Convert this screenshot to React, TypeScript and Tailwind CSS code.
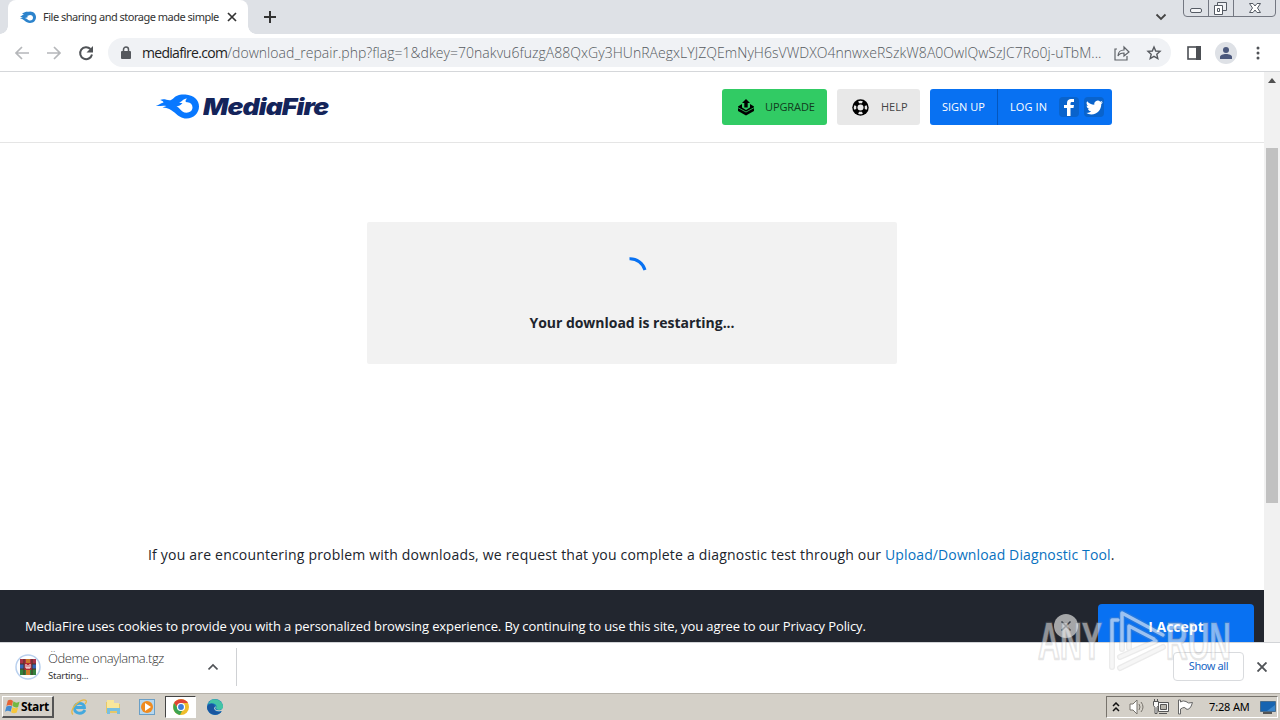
import React from "react";

const url = "/download_repair.php?flag=1&dkey=70nakvu6fuzgA88QxGy3HUnRAegxLYJZQEmNyH6sVWDXO4nnwxeRSzkW8A0OwlQwSzJC7Ro0j-uTbM...";

function Flame({ className, color }: { className: string; color: string }) {
  return (
    <svg className={className} viewBox="0 0 44 25" fill={color} fillRule="evenodd">
      <path d="M.3 12C3 11.500 5 9 8 8.500C7.500 7 6.500 6.500 4.700 6C8 4.500 11 6 14 6.300C17 6.300 18 3.500 21 2C24 .5 27 .2 30 .5C38 1 43.700 6 43.500 12.500C43.500 19 38 24.500 31 24.500C26 24.500 23 22 19 18.500C15 15.500 13 13.700 7 13.500L11 12C7 11 4 12.500 .3 12ZM21 12.500C24.500 13 25 18.500 31 18.700C34.500 18.700 37 16.500 37 13.500C37 10.500 35 8.500 32 8.300C30 8.300 29 7 31.500 4.500C27 5 26.500 8 23.500 8.500C25 9 26 9 27 9C25 11.500 23.500 12 21 12.500Z" />
    </svg>
  );
}

function TabStrip() {
  return (
    <div className="flex h-[34px] shrink-0 bg-[#dee1e6]">
      <div className="relative ml-2 flex h-full w-[240px] items-center rounded-t-lg bg-white pl-3">
        <i className="absolute -left-2 bottom-0 size-2 bg-[radial-gradient(circle_at_0_0,#dee1e6_7.5px,#fff_8px)]" />
        <i className="absolute -right-2 bottom-0 size-2 bg-[radial-gradient(circle_at_100%_0,#dee1e6_7.5px,#fff_8px)]" />
        <svg className="h-4 w-4 shrink-0" viewBox="0 0 16 16">
          <path fill="#2c83cc" fillRule="evenodd" d="M0 8L4 5L2 5C5 2 8 3 10 2.500C18 2.500 18 14 10 14C5 14 5 10 0 9.500L3 8ZM7 7C9 8 7 9 5 9C8 10 8 11.500 10 11.500C14 11.500 14 6 10 6Z" />
        </svg>
        <span className="ml-[7px] w-[178px] whitespace-nowrap font-['Noto_Sans'] text-[11px] tracking-[-0.5px] text-[#333]">File sharing and storage made simple</span>
        <svg className="ml-[6px] size-[10px]" viewBox="0 0 10 10" stroke="#333" strokeWidth="1.700"><path d="M1 1L9 9M9 1L1 9" /></svg>
      </div>
      <svg className="ml-[15px] mt-[10px] size-[14px]" viewBox="0 0 14 14" stroke="#333" strokeWidth="2"><path d="M7 1V13M1 7H13" /></svg>
      <svg className="ml-auto mr-[16px] mt-[13px] h-[8px] w-[12px]" viewBox="0 0 12 8" fill="none" stroke="#444" strokeWidth="1.800"><path d="M1.500 1.500L6 6L10.500 1.500" /></svg>
      <svg className="mr-[4px] h-[18px] w-[93px]" viewBox="0 0 93 18" fill="none" stroke="#737781">
        <path d="M.5 0V13Q.5 16.500 4 16.500H89Q92.500 16.500 92.500 13V0M25.500 0V16M50.500 0V16" />
        <g stroke="#555b64"><rect x="7.500" y="8.500" width="11" height="4" rx="1.500" fill="#f3f4f6" /><path fill="#eef0f3" d="M34.500 2.500H43.500V10.500H34.500Z" /><path fill="#fff" d="M31.500 5.500H39.500V14.500H31.500Z" /><path d="M34.500 8.500H36.500V11.500H34.500Z" /><path fill="#fff" d="M66.500 3.500H70L72 6L74 3.500H77.500L74.500 8L77.500 12.500H74L72 10L70 12.500H66.500L69.500 8Z" /></g>
      </svg>
    </div>
  );
}

function Toolbar() {
  return (
    <div className="flex h-[38px] shrink-0 items-center border-b border-[#d5d7da] bg-white">
      <svg className="ml-[14px] h-[16px] w-[82px]" viewBox="0 0 82 16" fill="none" strokeWidth="1.700">
        <g stroke="#b5b7ba"><path d="M15 8H2M8 2L2 8L8 14M33 8H46M40 2L46 8L40 14" /></g>
        <path stroke="#505357" strokeWidth="2" d="M76.500 4A6 6 0 1 0 78 9.500" /><path fill="#505357" d="M79 1V7.500H72.500Z" />
      </svg>
      <div className="ml-[12px] flex h-[29px] w-[1063px] items-center rounded-full bg-[#f0f2f5] pl-[13px]">
        <svg className="h-[13px] w-[10px] shrink-0" viewBox="0 0 10 13"><rect y="5" width="10" height="8" rx="1" fill="#55585d" /><path d="M2.500 6V3.500A2.500 2.500 0 0 1 7.500 3.500V6" fill="none" stroke="#55585d" strokeWidth="1.500" /></svg>
        <div className="ml-[11px] w-[962px] whitespace-nowrap font-['Open_Sans'] text-[14px] font-light tracking-[0.04px] text-[#555a60]">
          <span className="font-normal tracking-[-0.7px] text-[#222]">mediafire.com</span>{url}
        </div>
        <svg className="ml-[10px] h-[16px] w-[16px] shrink-0" viewBox="0 0 16 16" fill="none" stroke="#5f6368" strokeWidth="1.200"><path d="M3 4H1V15H13V11M4 11C4 7 7 5 10 5V2L15 7L10 11V8C7 8 5 9 4 11Z" /></svg>
        <svg className="ml-[16px] h-[16px] w-[16px] shrink-0" viewBox="0 0 16 16" fill="none" stroke="#55595e" strokeWidth="1.400"><path d="M8 2L9.700 6L14 6.400L10.800 9.300L11.800 13.500L8 11.300L4.200 13.500L5.200 9.300L2 6.400L6.300 6Z" /></svg>
      </div>
      <svg className="ml-[16px] h-[14px] w-[14px]" viewBox="0 0 14 14"><rect x="1" y="1" width="12" height="12" fill="#fff" stroke="#4c4f54" strokeWidth="1.600" /><path fill="#4c4f54" d="M9 0H14V14H9Z" /></svg>
      <svg className="ml-[14px] size-[22px]" viewBox="0 0 22 22"><circle cx="11" cy="11" r="11" fill="#dee1e6" /><g fill="#4b587c"><circle cx="11" cy="8" r="3" /><path d="M5 17V15C5 11 17 11 17 15V17Z" /></g></svg>
      <svg className="ml-[19px] h-[14px] w-[4px]" viewBox="0 0 4 14" fill="#505357"><circle cx="2" cy="2" r="1.500" /><circle cx="2" cy="7" r="1.500" /><circle cx="2" cy="12" r="1.500" /></svg>
    </div>
  );
}

function SiteHeader() {
  return (
    <header className="flex h-[71px] shrink-0 items-start border-b border-[#e5e5e5] pl-[155px] pt-[17px] font-['Open_Sans'] text-[11px]">
      <Flame className="mt-[5px] h-[25px] w-[45px]" color="#0878ff" />
      <span className="ml-[3px] mt-[3px] w-[129px] origin-left scale-x-[1.15] whitespace-nowrap font-['Inter'] text-[23px] font-black italic leading-[30px] tracking-[-0.75px] text-[#14245a]">MediaFire</span>
      <button className="ml-[390px] flex h-[36px] w-[105px] items-center rounded-[3px] bg-[#31cb64] pl-[15px] tracking-[-0.1px] text-[#123b20]">
        <svg className="mr-[10px] size-[18px]" viewBox="0 0 18 18"><path d="M1 8.500L5 6V9.500L9 12L13 9.500V6L17 8.500V13L9 17.500L1 13Z" /><path d="M9 1L13 5H10.700V9.500H7.300V5H5Z" /><path d="M1 9.700L9 14L17 9.700" stroke="#31cb64" strokeWidth=".8" fill="none" /></svg>
        UPGRADE
      </button>
      <button className="ml-[10px] flex h-[36px] w-[83px] items-center rounded-[3px] bg-[#e8e8e8] pl-[15px] text-[#444]">
        <svg className="mr-[12px] size-[17px]" viewBox="0 0 18 18"><circle cx="9" cy="9" r="8.700" /><g fill="#e8e8e8"><circle cx="9" cy="9" r="3.200" /><path d="M6.500 2.500Q9 1.200 11.500 2.500L10.500 4.500H7.500ZM6.500 15.500Q9 16.800 11.500 15.500L10.500 13.500H7.500ZM2.500 6.500Q1.200 9 2.500 11.500L4.500 10.500V7.500ZM15.500 6.500Q16.800 9 15.500 11.500L13.500 10.500V7.500Z" /></g></svg>
        HELP
      </button>
      <div className="ml-[10px] flex h-[36px] w-[182px] rounded-[3px] bg-[#0871f2] text-white">
        <span className="flex w-[68px] items-center whitespace-nowrap border-r border-[#0557be] pl-3">SIGN UP</span>
        <span className="flex w-[61px] items-center whitespace-nowrap pl-3 tracking-[0.1px]">LOG IN</span>
        <span className="mt-2 flex size-5 items-center justify-center rounded-sm bg-[#0963cc]"><svg className="h-[17px] w-[11px]" viewBox="0 0 11 17" fill="#fff"><path d="M3 17V9H0V6H3V4C3 1 5 0 7 0H10V3H8C7 3 6.500 3.500 6.500 4.500V6H10L9.500 9H6.500V17Z" /></svg></span>
        <span className="ml-[5px] mt-2 flex size-5 items-center justify-center rounded-sm bg-[#0963cc]"><svg className="size-[17px]" viewBox="0 0 24 24" fill="#fff"><path d="M23.950 4.570a10 10 0 0 1-2.820.770 4.960 4.960 0 0 0 2.160-2.720c-.95.550-2 .960-3.130 1.180a4.920 4.920 0 0 0-8.380 4.480A14 14 0 0 1 1.640 3.160a4.920 4.920 0 0 0 1.520 6.570 4.900 4.900 0 0 1-2.230-.610v.060a4.920 4.920 0 0 0 3.950 4.830 5 5 0 0 1-2.210.080 4.940 4.940 0 0 0 4.600 3.420A9.870 9.870 0 0 1 0 19.540a14 14 0 0 0 7.550 2.210c9.050 0 14-7.500 14-13.980l-.01-.630a10 10 0 0 0 2.410-2.570Z" /></svg></span>
      </div>
    </header>
  );
}

function Page() {
  return (
    <div className="flex h-[570px] shrink-0">
      <main className="flex w-[1264px] flex-col bg-white font-['Open_Sans']">
        <SiteHeader />
        <section className="mx-auto mt-[79px] flex h-[142px] w-[530px] flex-col items-center rounded-[2px] bg-[#f2f2f2]">
          <svg className="mt-[34px] size-[34px]" viewBox="0 0 34 34" fill="none"><path d="M14.500 2.700A15.500 15.500 0 0 1 30 14" stroke="#0871f2" strokeWidth="3" /></svg>
          <b className="mt-[23px] whitespace-nowrap text-[14px] leading-[20px] tracking-[-0.03px] text-[#20242c]">Your download is restarting...</b>
        </section>
        <p className="ml-[148px] mt-[180px] whitespace-nowrap text-[14px] leading-[22px] tracking-[0.2px] text-[#20242c]">
          If you are encountering problem with downloads, we request that you complete a diagnostic test through our <span className="tracking-[0.12px] text-[#0871c0]">Upload/Download Diagnostic Tool</span>.
        </p>
        <div className="mt-auto flex h-[52px] items-start bg-[#22262f] text-white">
          <p className="ml-[25px] mt-[25px] w-[1029px] whitespace-nowrap text-[13px] leading-[22px] tracking-[-0.108px]">MediaFire uses cookies to provide you with a personalized browsing experience. By continuing to use this site, you agree to our Privacy Policy.</p>
          <svg className="mt-[24px] size-6" viewBox="0 0 24 24"><circle cx="12" cy="12" r="12" fill="#a5a6a8" /><path d="M7.500 7.500L16.500 16.500M16.500 7.500L7.500 16.500" stroke="#333943" strokeWidth="1.500" /></svg>
          <button className="ml-[20px] mt-[14px] h-[38px] w-[156px] rounded-t-[4px] bg-[#0871f2] pt-[6px] text-[14px] font-bold">I Accept</button>
        </div>
      </main>
      <div className="flex w-4 flex-col items-center bg-[#f1f1f1]">
        <svg className="mt-[6px] h-[5px] w-[8px]" viewBox="0 0 8 5" fill="#505050"><path d="M4 0L8 5H0Z" /></svg>
        <div className="mt-[65px] h-[355px] w-3 bg-[#c1c1c1]" />
      </div>
    </div>
  );
}

function Shelf() {
  return (
    <div className="flex h-[51px] shrink-0 items-start border-t border-[#d2d4d7] bg-white font-['Noto_Sans'] text-[#333]">
      <svg className="ml-[15px] mt-[11px] size-[26px] shrink-0" viewBox="0 0 26 26"><circle cx="13" cy="13" r="12" fill="#fff" stroke="#b9d0ee" strokeWidth="1.500" /><path fill="#a83248" d="M5 5H21V10H5Z" /><path fill="#3466ba" d="M5 10H21V15H5Z" /><path fill="#34813d" d="M5 15H21V21H5Z" /><path d="M5 10H21M5 15H21M9 5V21M17 5V21" stroke="#493326" /><path fill="#cd792b" d="M11 5H15V21H11Z" /><path fill="#b52832" d="M9.500 9H16.500V16H9.500Z" /><path d="M11 10V14H15V10M13 11V14" stroke="#fff" fill="none" /></svg>
      <div className="ml-[7px] mt-[5px] w-[160px] whitespace-nowrap">
        <div className="font-['Open_Sans'] text-[13px] font-light leading-[20px] tracking-[-0.42px]">Ödeme onaylama.tgz</div>
        <div className="mt-px text-[9.5px] leading-[14px] tracking-[-0.25px]">Starting...</div>
      </div>
      <svg className="mt-[20px] h-[8px] w-[10px]" viewBox="0 0 10 8" fill="none" stroke="#505357" strokeWidth="1.700"><path d="M.5 6.500L5 2L9.500 6.500" /></svg>
      <div className="ml-[18px] mt-[5px] h-[38px] w-px bg-[#cfd1d4]" />
      <button className="ml-auto mt-[9px] h-[29px] w-[71px] rounded-[4px] border border-[#d9dbde] text-[11px] tracking-[-0.4px] text-[#1967c5]">Show all</button>
      <svg className="ml-[13px] mr-[13px] mt-[19px] size-[10px]" viewBox="0 0 10 10" stroke="#505357" strokeWidth="1.900"><path d="M.5 .5L9.500 9.500M9.500 .5L.5 9.500" /></svg>
    </div>
  );
}

function Taskbar() {
  return (
    <div className="flex h-[27px] shrink-0 items-center border-t border-[#b6b2aa] bg-[#d4d0c8] font-['Noto_Sans']">
      <div className="ml-[2px] flex h-[22px] w-[52px] items-center border-b-2 border-r-2 border-t border-l border-b-[#555] border-l-white border-r-[#555] border-t-white pl-[2px] font-['Open_Sans'] text-[12px] font-bold tracking-[-0.35px] text-black">
        <svg className="mr-[1px] size-[15px] shrink-0" viewBox="0 0 16 16"><path fill="#e56435" d="M3 1.500Q6 0 8.500 2L7.500 7.500Q5 5.500 1.500 7.500Z" /><path fill="#73b843" d="M9 2.500Q12 5 15.500 3L14 8.500Q11 10 8 7.500Z" /><path fill="#438bd1" d="M1.500 8Q5 6.500 7.500 8L6 13.500Q3 11.500 0 13.500Z" /><path fill="#f6c73b" d="M8 8.500Q11 11 14 9L12.500 14.500Q9 16 6.500 14Z" /></svg>Start
      </div>
      <svg className="ml-[17px] size-4" viewBox="0 0 16 16" fill="none"><path d="M14 11C11 16 3.500 15 3.500 9C3.500 3 13.500 3 13.500 8.500H5" stroke="#44a9de" strokeWidth="2.800" /><path d="M2 15.500C-3 11 10-2 15 1.500Q16 3 14 5" stroke="#e7b744" strokeWidth="1.300" /></svg>
      <svg className="ml-[18px] size-4" viewBox="0 0 16 16"><path fill="#e6c768" d="M1 3H6L7 5H15V14H1Z" /><path fill="#f9e79b" d="M2 1H9V4H14V11H2Z" /><path fill="#78bfe0" d="M2 9H15V15H12V12H5V15H2Z" /></svg>
      <svg className="ml-[18px] size-[16px]" viewBox="0 0 16 16"><rect x=".5" y=".5" width="15" height="15" fill="#b6d7ef" stroke="#6a9fc6" /><circle cx="8" cy="8" r="6" fill="#ef8b20" /><path fill="#fff" d="M6 4L12 8L6 12Z" /></svg>
      <div className="ml-[10px] flex h-[22px] w-[31px] items-center justify-center border border-b-white border-l-[#444] border-r-white border-t-[#444] bg-white">
        <svg className="size-4" viewBox="0 0 16 16"><circle cx="8" cy="8" r="8" fill="#efbd2b" /><path fill="#e04436" d="M1 4C4-1 12-1 15 4H8L5 9Z" /><path fill="#3da452" d="M1 4L6 11L9 12L7 16C1 15-1 9 1 4Z" /><circle cx="8" cy="8" r="3.500" fill="#3c7dd9" stroke="#fff" strokeWidth="1.200" /></svg>
      </div>
      <svg className="ml-[11px] size-4" viewBox="0 0 16 16"><circle cx="8" cy="8" r="8" fill="#1679bd" /><path fill="#43c4a5" d="M4 1C11-2 17 4 16 9C14 12 9 11 9 9C11 6 7 3 1 5Z" /><path fill="#1956a0" d="M1 6C6 3 9 6 7 9C7 13 12 14 15 12C10 19 0 15 0 8Z" /><path fill="#d4d0c8" d="M9 7L8 10Q10 12 14 11L16 9V13L14 12Q8 13 7 9Z" /></svg>
      <div className="ml-auto mr-[2px] flex h-[22px] w-[172px] items-center border border-b-white border-l-[#77736c] border-r-white border-t-[#77736c] text-[11px] text-black">
        <svg className="ml-[5px] h-[10px] w-[8px]" viewBox="0 0 8 10" fill="none" stroke="#111" strokeWidth="1.500"><path d="M1 4L4 1L7 4M1 9L4 6L7 9" /></svg>
        <svg className="ml-[9px] h-[16px] w-[17px]" viewBox="0 0 17 16" fill="#fff" stroke="#77736c"><path d="M1 5H4L8 1V15L4 11H1Z" /><path fill="none" d="M10 5Q12 8 10 11M12 3Q16 8 12 13" /></svg>
        <svg className="ml-[7px] size-[16px]" viewBox="0 0 16 16" fill="#f8f8f8" stroke="#555"><path d="M5.500 3.500H15.500V12.500H5.500Z" /><path fill="#b8b5ad" d="M7.500 5.500H13.500V10.500H7.500Z" /><path d="M.5 2.500H5.500V6.500L4 8.500V14.500H2V8.500L.5 6.500ZM1.500 0V2M4.500 0V2M6 14.500H14" /></svg>
        <svg className="ml-[8px] h-[16px] w-[17px]" viewBox="0 0 17 16" fill="#fff" stroke="#666"><path d="M1.500 1V15H3.500V10Q8 7 9 10Q13 12 15.500 3.500Q11 5 9 2.500Q6 1 3.500 3V1Z" /></svg>
        <span className="ml-[15px] w-[42px] whitespace-nowrap tracking-[-0.15px]">7:28 AM</span>
        <svg className="ml-[9px] h-[13px] w-[16px] shrink-0" viewBox="0 0 16 13"><path fill="#1764b1" stroke="#486c8c" d="M.5 .5H15.500V10.500H.5Z" /><path fill="#3b86cb" d="M7 10L15 4V10Z" /><path stroke="#555" strokeWidth="2" d="M3 12H12" /></svg>
      </div>
    </div>
  );
}

export default function App() {
  return (
    <div className="relative flex h-[720px] w-[1280px] flex-col overflow-hidden bg-white">
      <TabStrip />
      <Toolbar />
      <Page />
      <Shelf />
      <Taskbar />
      <svg className="pointer-events-none absolute left-[1034px] top-[604px] h-[72px] w-[204px]" viewBox="0 0 204 72" fill="#fff" fillOpacity=".5" stroke="#9b9b9b" strokeOpacity=".25" strokeWidth="2.500" strokeLinejoin="round" fontFamily="Liberation Sans" fontSize="51" fontWeight="bold">
        <text x="4" y="55" textLength="64" lengthAdjust="spacingAndGlyphs">ANY</text>
        <text x="132" y="55" textLength="65" lengthAdjust="spacingAndGlyphs">RUN</text>
        <g fill="none" strokeLinecap="round">
          <path stroke="#9b9b9b" strokeOpacity=".2" strokeWidth="6" d="M84 16H78V63M88 45V9L129 31M95 44V22L120 35M86 64L129 43M86 53L122 37" />
          <path stroke="#fff" strokeOpacity=".55" strokeWidth="3.500" d="M84 16H78V63M88 45V9L129 31M95 44V22L120 35M86 64L129 43M86 53L122 37" />
        </g>
      </svg>
    </div>
  );
}
